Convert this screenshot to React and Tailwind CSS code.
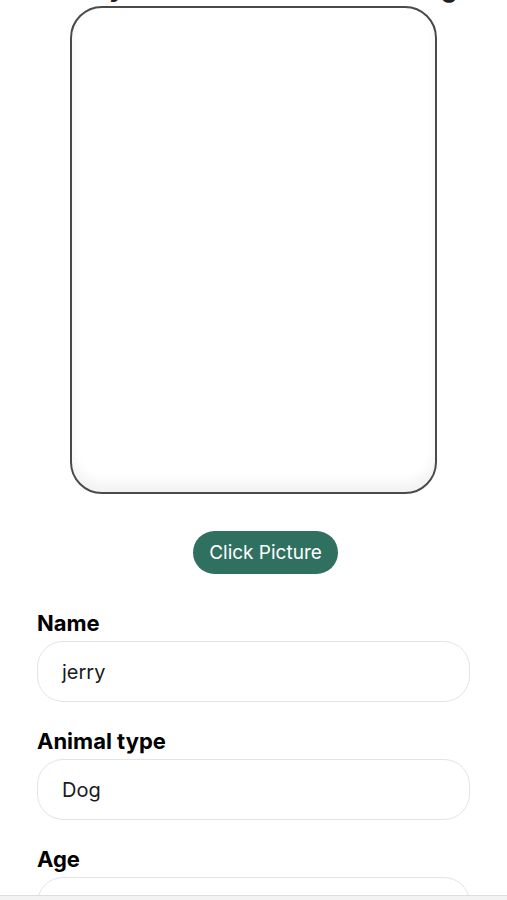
import React from "react";

const Field = ({ label, value }) => {
  return (
    <div className="flex flex-col">
      <label className="text-[22px] leading-[28px] font-bold text-black mb-[4px]">
        {label}
      </label>
      <div className="h-[61px] w-full rounded-[26px] border border-[#e4e4e4] bg-white flex items-center px-[24px] text-[20px] text-[#1a1a1a]">
        {value}
      </div>
    </div>
  );
};

export default function App() {
  return (
    <div
      className="w-[507px] h-[900px] overflow-hidden bg-white relative"
      style={{ fontFamily: "Inter, 'Noto Sans', sans-serif" }}
    >
      <div className="flex flex-col items-center">
        {/* header title, mostly scrolled out of view */}
        <h1 className="text-[26px] leading-[32px] font-bold text-[#1f1f1f] -mt-[28px] whitespace-nowrap">
          Easily share a new animal listing
        </h1>

        {/* picture preview */}
        <div className="mt-[2px] w-[367px] h-[488px] rounded-[32px] border-2 border-[#4a4a4a] bg-white shadow-[inset_0_-10px_12px_rgba(0,0,0,0.05)]"></div>

        <button className="mt-[37px] ml-[24px] h-[43px] px-[16px] rounded-full bg-[#2f7061] text-white text-[19px] leading-none">
          Click Picture
        </button>
      </div>

      {/* form */}
      <div className="mt-[35px] px-[37px] flex flex-col gap-[25px]">
        <Field label="Name" value="jerry" />
        <Field label="Animal type" value="Dog" />
        <Field label="Age" value="" />
      </div>

      <div className="absolute bottom-0 left-0 right-0 h-[5px] bg-[#f3f3f3] border-t border-[#dedede]"></div>
    </div>
  );
}
